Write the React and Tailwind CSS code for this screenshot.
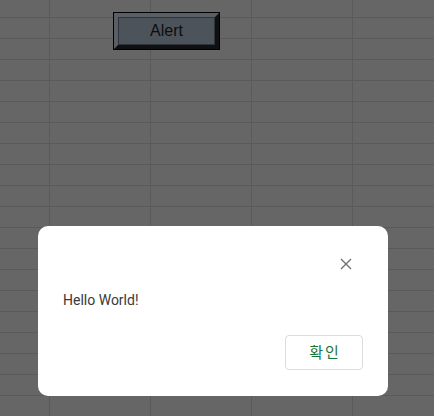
const COLS = [50, 101, 101, 101];
const ROWS = 20;

function GridBackground() {
  return (
    <div className="flex flex-col">
      {Array.from({ length: ROWS }).map((_, r) => (
        <div
          key={r}
          className={`flex border-b border-[#5a5a5a] ${r === 0 ? 'h-[18px]' : 'h-[21px]'}`}
        >
          {COLS.map((w, c) => (
            <div key={c} className="h-full border-r border-[#5a5a5a]" style={{ width: w }} />
          ))}
          <div className="flex-1" />
        </div>
      ))}
    </div>
  );
}

export default function App() {
  return (
    <div
      className="relative w-[434px] h-[416px] overflow-hidden bg-[#666666]"
      style={{ fontFamily: 'Roboto, "Noto Sans CJK KR", sans-serif' }}
    >
      <GridBackground />

      <button className="absolute left-[113px] top-[12px] w-[107px] h-[38px] border border-black bg-black p-0">
        <span className="flex w-full h-full border-[4px] [border-style:outset] border-[#5a5f66] bg-[#4d535b]">
          <span
            className="flex flex-1 items-center justify-center border border-[#30343a] text-[16px] text-[#0d0d0d]"
            style={{ fontFamily: '"Liberation Sans", Arial, sans-serif' }}
          >
            Alert
          </span>
        </span>
      </button>

      <div className="absolute left-[38px] top-[226px] w-[350px] h-[170px] bg-white rounded-[10px] flex flex-col px-[25px] pt-[26px] pb-[26px]">
        <div className="flex justify-end h-[24px]">
          <button className="mr-[5px] w-[24px] h-[24px] flex items-center justify-center">
            <svg width="12" height="12" viewBox="0 0 12 12" fill="none">
              <path d="M1 1L11 11M11 1L1 11" stroke="#707070" strokeWidth="1.4" />
            </svg>
          </button>
        </div>
        <p className="mt-[14px] text-[14px] leading-[20px] text-[#3a3a3a]">Hello World!</p>
        <div className="mt-auto flex justify-end">
          <button
            className="w-[78px] h-[35px] rounded-[4px] border border-[#dcdcdc] bg-white text-[15px] font-normal text-[#137538] tracking-[2px] pl-[2px]"
            style={{ fontFamily: '"Noto Sans CJK KR", sans-serif' }}
          >
            확인
          </button>
        </div>
      </div>
    </div>
  );
}
